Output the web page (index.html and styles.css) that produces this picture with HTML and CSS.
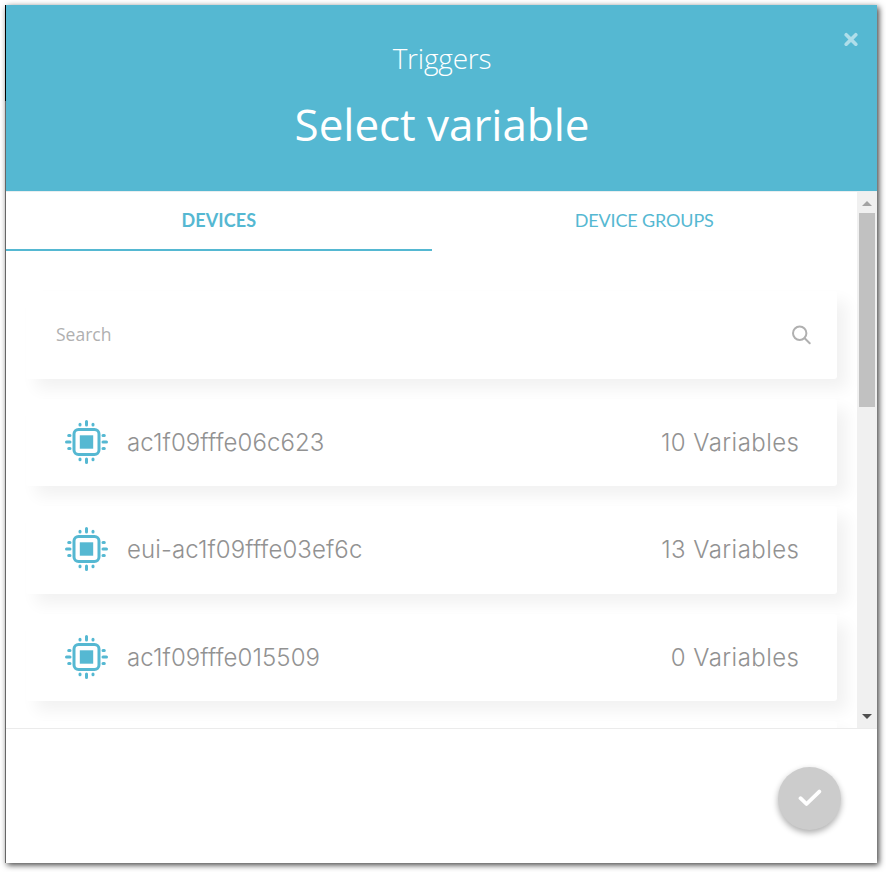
FILE: index.html
```html
<!DOCTYPE html>
<html lang="en">
<head>
<meta charset="utf-8">
<title>Select variable</title>
<link rel="stylesheet" href="styles.css">
</head>
<body>
<svg class="defs" width="0" height="0" aria-hidden="true">
  <symbol id="chip" viewBox="0 0 44 44">
    <g fill="none" stroke="currentColor" stroke-width="3" stroke-linecap="round">
      <rect x="10" y="9.500" width="25" height="25" rx="4.500"/>
      <path d="M22.500 1.500v3.600M22.500 38.900v3.600M2.500 22H6M39 22h3.500M16 4.200v.8M29 4.200v.8M16 39v.8M29 39v.8M4.700 15.500H6M4.700 28.500H6M39 15.500h1.300M39 28.500h1.300"/>
    </g>
    <path fill="currentColor" d="M15.800 15.300h13.400v13.400H15.800z"/>
  </symbol>
</svg>
<main class="dialog">
  <header class="header">
    <p class="context">Triggers</p>
    <h1 class="title">Select variable</h1>
    <button class="close" aria-label="Close"><svg width="14" height="14" viewBox="0 0 14 14"><path d="M2.200 2.700l9.600 9.600M11.800 2.700l-9.600 9.600" stroke="currentColor" stroke-width="3.600" stroke-linecap="round"/></svg></button>
  </header>
  <section class="body">
    <div class="content">
      <nav class="tabs"><a class="tab active">DEVICES</a><a class="tab">DEVICE GROUPS</a></nav>
      <div class="list">
        <div class="card search"><span class="hint">Search</span><svg width="20" height="20" viewBox="0 0 20 20" fill="none" stroke="currentColor" stroke-width="2" stroke-linecap="round"><circle cx="8.700" cy="8.200" r="6.700"/><path d="M13.700 13.200l5 5"/></svg></div>
        <div class="card device"><svg class="chip"><use href="#chip"/></svg><span class="name">ac1f09fffe06c623</span><span class="count">10 Variables</span></div>
        <div class="card device"><svg class="chip"><use href="#chip"/></svg><span class="name">eui-ac1f09fffe03ef6c</span><span class="count">13 Variables</span></div>
        <div class="card device"><svg class="chip"><use href="#chip"/></svg><span class="name">ac1f09fffe015509</span><span class="count">0 Variables</span></div>
        <div class="card device"></div>
      </div>
    </div>
    <div class="scrollbar">
      <svg width="10" height="5" viewBox="0 0 10 5"><path d="M0 5L5 0l5 5z" fill="#a3a3a3"/></svg>
      <div class="thumb"></div>
      <svg class="down" width="10" height="5" viewBox="0 0 10 5"><path d="M0 0h10L5 5z" fill="#505050"/></svg>
    </div>
  </section>
  <footer class="footer">
    <button class="confirm" aria-label="Confirm"><svg width="24" height="18" viewBox="0 0 24 18"><path d="M2.500 9.200l6 5.800L21.300 2.600" fill="none" stroke="#fff" stroke-width="3.800" stroke-linecap="round" stroke-linejoin="round"/></svg></button>
  </footer>
</main>
</body>
</html>
```
FILE: styles.css
```css
* { box-sizing: border-box; }
body { margin: 0; padding: 5px 9px 9px 5px; height: 872px; overflow: hidden; background: #fff; font-family: "Open Sans", sans-serif; }
.defs { display: block; height: 0; }
button { border: 0; padding: 0; }
svg { display: block; flex: none; }
.dialog { height: 858px; display: flex; flex-direction: column; background: linear-gradient(#000 96px, #666 96px) left / 1px 100% no-repeat, #fff; padding-left: 1px; box-shadow: 2px 2px 6px rgba(0,0,0,.75); }
.header { position: relative; height: 186px; flex: none; background: #55b8d2; color: #fff; text-align: center; }
.context { margin: 0; padding: 34px 0 0 1px; font-size: 28px; line-height: 38px; font-weight: 300; letter-spacing: -.2px; }
.title { margin: 17px 0 0; padding-left: 1px; font-size: 44px; line-height: 60px; font-weight: 400; letter-spacing: -.05px; }
.close { position: absolute; right: 19px; top: 27px; background: none; color: #afdeea; }
.body { display: flex; height: 538px; flex: none; border-top: 1px solid #e9eef0; border-bottom: 1px solid #ebebeb; }
.content { flex: 1; overflow: hidden; }
.tabs { display: flex; height: 59px; }
.tab { flex: 1; text-align: center; font: 400 18px/56px Lato, sans-serif; letter-spacing: -.15px; color: #55b8d2; }
.active { border-bottom: 2px solid #55b8d2; font-weight: 700; letter-spacing: .1px; }
.list { padding: 40px 20px 0; display: flex; flex-direction: column; gap: 20px; }
.card { flex: none; height: 87.300px; background: #fff; border-radius: 3px; box-shadow: 10px 10px 16px rgba(0,0,0,.055); display: flex; align-items: center; }
.search { height: 88px; padding: 0 26px 0 30px; justify-content: space-between; color: #b0b0b0; }
.hint { font-size: 17.500px; margin-top: -2px; }
.device { padding: 0 38px; color: #929292; font: 300 24px Inter, sans-serif; }
.chip { width: 44px; height: 44px; color: #55b8d2; margin: -1px 19px 0 0; }
.name { letter-spacing: .1px; }
.count { margin-left: auto; letter-spacing: .45px; margin-right: -.45px; }
.scrollbar { width: 20px; background: #f0f0f0; padding: 9px 2px 9px; display: flex; flex-direction: column; align-items: center; }
.thumb { margin-top: 7px; width: 16px; height: 194px; background: #c1c1c1; }
.down { margin-top: auto; }
.footer { flex: 1; padding: 38px 36px 0; }
.confirm { margin-left: auto; width: 63px; height: 63px; border-radius: 50%; background: #ccc; display: flex; align-items: center; justify-content: center; box-shadow: 0 3px 6px rgba(0,0,0,.32); }
.confirm svg { margin-top: -2px; }
```
